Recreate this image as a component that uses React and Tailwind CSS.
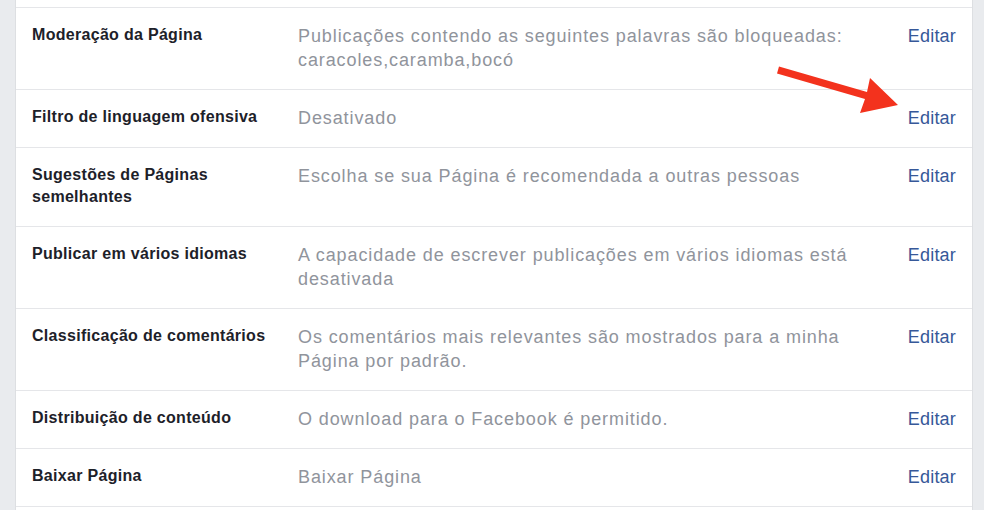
const rows = [
  {
    label: "Moderação da Página",
    value: "Publicações contendo as seguintes palavras são bloqueadas: caracoles,caramba,bocó",
  },
  { label: "Filtro de linguagem ofensiva", value: "Desativado" },
  {
    label: "Sugestões de Páginas semelhantes",
    value: "Escolha se sua Página é recomendada a outras pessoas",
  },
  {
    label: "Publicar em vários idiomas",
    value: "A capacidade de escrever publicações em vários idiomas está desativada",
  },
  {
    label: "Classificação de comentários",
    value: "Os comentários mais relevantes são mostrados para a minha Página por padrão.",
  },
  { label: "Distribuição de conteúdo", value: "O download para o Facebook é permitido." },
  { label: "Baixar Página", value: "Baixar Página" },
];

const Arrow = () => (
  <svg
    className="absolute left-0 top-0 pointer-events-none"
    width="984"
    height="510"
    viewBox="0 0 984 510"
  >
    <polygon
      points="779,66.5 867,92 870,78 898,105 860,113 865,99 777,73.5"
      fill="#f3321d"
    />
  </svg>
);

export default function App() {
  return (
    <div
      className="relative w-[984px] h-[510px] overflow-hidden bg-[#e9ebee]"
      style={{ fontFamily: '"Liberation Sans", Arial, sans-serif' }}
    >
      <div className="ml-[15px] w-[958px] h-full bg-white border-x border-[#dddfe2] pt-[7px]">
        {rows.map((row, i) => (
          <div
            key={i}
            className="flex items-start border-t border-[#e5e6e9] pt-4 pb-[17.2px] pl-4 pr-4"
          >
            <div className="w-[266px] shrink-0 pr-4 text-[16px] leading-[22px] tracking-[0.3px] font-bold text-[#1d2129]">
              {row.label}
            </div>
            <div className="w-[565px] shrink-0 text-[18px] leading-[24px] tracking-[0.9px] text-[#90949c]">
              {row.value}
            </div>
            <div className="flex-1 text-right text-[18px] leading-[24px] tracking-[0.2px] text-[#365899]">
              Editar
            </div>
          </div>
        ))}
        <div className="border-t border-[#e5e6e9]" />
      </div>
      <Arrow />
    </div>
  );
}
